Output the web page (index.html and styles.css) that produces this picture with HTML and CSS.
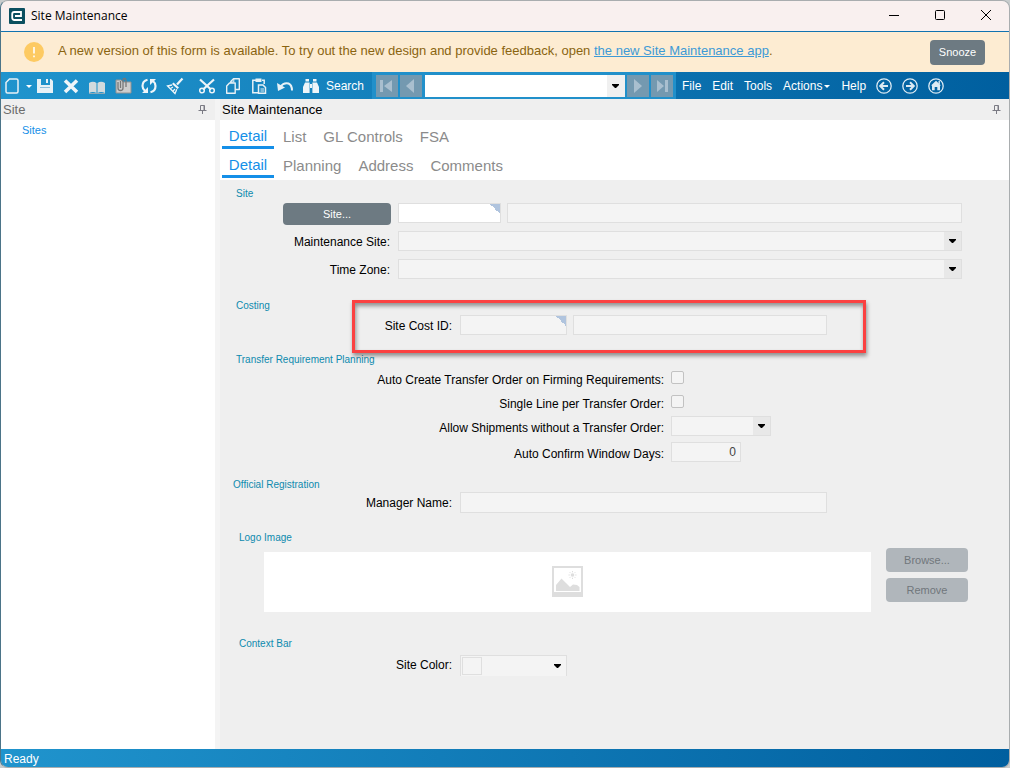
FILE: index.html
```
<!DOCTYPE html>
<html lang="en">
<head>
  <meta charset="UTF-8" />
  <meta name="viewport" content="width=device-width, initial-scale=1.0"/>
  <title>Site Maintenance</title>
  <link rel="stylesheet" href="styles.css">
</head>
<body>
<div class="window">

  <header class="titlebar">
    <svg class="app-logo" viewBox="0 0 16 16"><rect width="16" height="16" rx="1" fill="#0b4f60"/><path d="M13 12H5.500Q3.200 12 3.200 9.800V6Q3.200 4 5.200 4H12V8H6" fill="none" stroke="#fff" stroke-width="1.800"/></svg>
    <span class="title">Site Maintenance</span>
    <button class="win-btn" aria-label="Minimize"><svg viewBox="0 0 12 12"><path d="M1 6.5H11"/></svg></button>
    <button class="win-btn" aria-label="Maximize"><svg viewBox="0 0 12 12"><rect x="1.5" y="1.5" width="9" height="9" rx="1"/></svg></button>
    <button class="win-btn" aria-label="Close"><svg viewBox="0 0 12 12"><path d="M1 1L11 11M11 1L1 11"/></svg></button>
  </header>

  <div class="banner">
    <svg class="banner-icon" viewBox="0 0 20 20"><circle cx="10" cy="10" r="10" fill="#fdca62"/><path d="M10 5V11.5M10 13.5V15.2" stroke="#fff" stroke-width="1.6"/></svg>
    <p>A new version of this form is available. To try out the new design and provide feedback, open <a href="#">the new Site Maintenance app</a>.</p>
    <button class="btn snooze">Snooze</button>
  </div>

  <nav class="toolbar">
    <button class="tool new" aria-label="New"><svg viewBox="0 0 18 18"><path d="M6.5 2H13.5Q15 2 15 3.5V14.5Q15 16 13.5 16H4.5Q3 16 3 14.5V5.5Z" fill="none" stroke="#e8f1f6" stroke-width="1.5"/></svg></button>
    <button class="tool-caret" aria-label="New options"></button>
    <button class="tool" aria-label="Save"><svg viewBox="0 0 18 18"><path d="M1 2H5V8H14V2H15L17 4V16H1Z" fill="#e8f1f6"/><path d="M10 2H12V6H10Z" fill="#e8f1f6"/><path d="M4 10.5H14" stroke="#8dbedb"/></svg></button>
    <button class="tool" aria-label="Delete"><svg viewBox="0 0 18 18"><path d="M3 3.5L15 15M15 3.5L3 15" stroke="#eef5f9" stroke-width="3.6"/></svg></button>
    <button class="tool" aria-label="Book"><svg viewBox="0 0 18 18"><path d="M1 6Q5 3.5 8.5 6V16Q5 14 1 16ZM9.5 6Q13 3.5 17 6V16Q13 14 9.5 16Z" fill="#d2dadd"/><path d="M1 16.5H17" stroke="#8ba9b7"/></svg></button>
    <button class="tool" aria-label="Attachments"><svg viewBox="0 0 18 18"><path d="M2 3H7L9 5H17V16H2Z" fill="#cdcdcd" stroke="#929292"/><path d="M4 5V11Q4 13.500 6.500 13.500T9 11V3.500Q9 1.500 10.500 1.500T12 3.500V10M6.500 4V11" fill="none" stroke="#777" stroke-width="1.300"/></svg></button>
    <button class="tool" aria-label="Refresh"><svg viewBox="0 0 18 18"><path d="M7.5 2.7Q2.5 4 2.5 9Q2.5 12 5 14M10.5 15.3Q15.5 14 15.5 9Q15.5 6 13 4" fill="none" stroke="#eef5f9" stroke-width="2.2"/><path d="M2 16H8V10ZM16 2H10V8Z" fill="#eef5f9"/></svg></button>
    <button class="tool" aria-label="Clear"><svg viewBox="0 0 18 18"><path d="M16.500 1.500L11 7.500" stroke="#eef5f9" stroke-width="2.200"/><path d="M7.500 5.500L13 10.500L11.500 12L6 7Z" fill="#eef5f9"/><path d="M6 8L1.500 9L9 16.500L10.800 12.300" fill="none" stroke="#eef5f9" stroke-width="1.300"/><path d="M4.500 11.500L7 10M7 14L9 12" stroke="#eef5f9" stroke-width="1.200"/></svg></button>
    <button class="tool cut" aria-label="Cut"><svg viewBox="0 0 18 18"><path d="M2 2.5L13 12.5M16 2.5L5 12.5" stroke="#eef5f9" stroke-width="2.2"/><circle cx="4" cy="13.5" r="2.3" fill="none" stroke="#eef5f9" stroke-width="1.5"/><circle cx="14" cy="13.5" r="2.3" fill="none" stroke="#eef5f9" stroke-width="1.5"/></svg></button>
    <button class="tool" aria-label="Copy"><svg viewBox="0 0 18 18"><g fill="#1a86bf" stroke="#e8f1f6" stroke-width="1.4" stroke-linejoin="round"><path d="M9.5 1.8H15.3V12.5H6.8V4.5Z"/><path d="M5.5 6H11.2V16.2H2.7V9Z"/></g><path d="M9.8 2V5H7" fill="none" stroke="#e8f1f6"/></svg></button>
    <button class="tool" aria-label="Paste"><svg viewBox="0 0 18 18"><path d="M6 3.2H2.8V15.8H8M12 3.2H14.2V7" fill="none" stroke="#e8f1f6" stroke-width="1.5"/><path d="M5.5 1.5H11.5V5H5.5Z" fill="#e8f1f6"/><path d="M8.5 8H13L15.5 10.5V16.3H8.5Z" fill="#1a86bf" stroke="#e8f1f6" stroke-width="1.5"/><path d="M10.5 12H14M10.5 14H14" stroke="#e8f1f6"/></svg></button>
    <button class="tool" aria-label="Undo"><svg viewBox="0 0 18 18"><path d="M1 6L2 14L9 10.5Z" fill="#e8f1f6"/><path d="M4 10Q8 5 12.5 6.5Q16 8 16 13.5" fill="none" stroke="#e8f1f6" stroke-width="2"/></svg></button>
    <button class="tool-search"><svg viewBox="0 0 18 18"><path d="M3.5 2H7V4.5H3.5ZM11 2H14.5V4.5H11ZM3 5.5H7.6V16H1V10ZM10.4 5.5H15L17 10V16H10.4ZM8 7H10V11H8Z" fill="#eef5f9"/></svg>Search</button>

    <div class="record-nav">
      <button class="nav-btn" aria-label="First"><svg viewBox="0 0 22 22"><path d="M4 5H7V17H4ZM16 5V17L8 11Z"/></svg></button>
      <button class="nav-btn" aria-label="Previous"><svg viewBox="0 0 22 22"><path d="M14 4V18L6 11Z"/></svg></button>
      <select class="record-select" aria-label="Record"><option></option></select>
      <button class="nav-btn" aria-label="Next"><svg viewBox="0 0 22 22"><path d="M7 4V18L15 11Z"/></svg></button>
      <button class="nav-btn" aria-label="Last"><svg viewBox="0 0 22 22"><path d="M6 5V17L13 11ZM14 5H17V17H14Z"/></svg></button>
    </div>

    <div class="menus">
      <button>File</button>
      <button>Edit</button>
      <button>Tools</button>
      <button class="has-caret">Actions</button>
      <button>Help</button>
    </div>
    <button class="tool" aria-label="Back"><svg viewBox="0 0 18 18"><g fill="none" stroke="#dceaf3"><circle cx="9" cy="9" r="7.2" stroke-width="1.3"/><path d="M13 9H5.5M9 5.2L5.2 9L9 12.8" stroke-width="2"/></g></svg></button>
    <button class="tool" aria-label="Forward"><svg viewBox="0 0 18 18"><g fill="none" stroke="#dceaf3"><circle cx="9" cy="9" r="7.2" stroke-width="1.3"/><path d="M5 9H12.5M9 5.2L12.8 9L9 12.8" stroke-width="2"/></g></svg></button>
    <button class="tool" aria-label="Home"><svg viewBox="0 0 18 18"><circle cx="9" cy="9" r="7.2" stroke-width="1.3" fill="none" stroke="#dceaf3"/><path d="M9 3.8L14 8.5H13V13.3H10.3V10H7.7V13.3H5V8.5H4Z" fill="#dceaf3"/><path d="M12.2 4V7" stroke="#dceaf3" stroke-width="1.4"/></svg></button>
  </nav>

  <div class="panes">
    <aside class="tree-pane">
      <div class="pane-head">
        <span>Site</span>
        <svg class="pin" viewBox="0 0 9 11"><path d="M2.5 6V1.5H6.5V6M6 1.5V6M0.5 6.5H8.5M4.5 6.5V10"/></svg>
      </div>
      <a class="tree-link" href="#">Sites</a>
    </aside>

    <main class="main-pane">
      <div class="pane-head dark">
        <span>Site Maintenance</span>
        <svg class="pin" viewBox="0 0 9 11"><path d="M2.5 6V1.5H6.5V6M6 1.5V6M0.5 6.5H8.5M4.5 6.5V10"/></svg>
      </div>
      <div class="tabs">
        <button class="active">Detail</button>
        <button>List</button>
        <button>GL Controls</button>
        <button>FSA</button>
      </div>
      <div class="tabs">
        <button class="active">Detail</button>
        <button>Planning</button>
        <button>Address</button>
        <button>Comments</button>
      </div>

      <form class="form">
        <section class="group site">
          <h2>Site</h2>
          <div class="row">
            <button type="button" class="btn site-btn">Site...</button>
            <input type="text" class="key white" aria-label="Site ID">
            <input type="text" class="grow" aria-label="Site name" readonly>
          </div>
          <div class="row">
            <label for="maint-site">Maintenance Site:</label>
            <select id="maint-site" class="grow"><option></option></select>
          </div>
          <div class="row">
            <label for="time-zone">Time Zone:</label>
            <select id="time-zone" class="grow"><option></option></select>
          </div>
        </section>

        <section class="group costing">
          <h2>Costing</h2>
          <div class="row">
            <label for="cost-id">Site Cost ID:</label>
            <input type="text" id="cost-id" class="key">
            <input type="text" class="cost-name" aria-label="Site cost description" readonly>
          </div>
          <div class="highlight"></div>
        </section>

        <section class="group planning">
          <h2>Transfer Requirement Planning</h2>
          <div class="row">
            <label for="auto-create">Auto Create Transfer Order on Firming Requirements:</label>
            <input type="checkbox" id="auto-create">
          </div>
          <div class="row">
            <label for="single-line">Single Line per Transfer Order:</label>
            <input type="checkbox" id="single-line">
          </div>
          <div class="row">
            <label for="allow-ship">Allow Shipments without a Transfer Order:</label>
            <select id="allow-ship"><option></option></select>
          </div>
          <div class="row days">
            <label for="window-days">Auto Confirm Window Days:</label>
            <input type="text" id="window-days" class="number" value="0">
          </div>
        </section>

        <section class="group registration">
          <h2>Official Registration</h2>
          <div class="row">
            <label for="manager">Manager Name:</label>
            <input type="text" id="manager" class="manager">
          </div>
        </section>

        <section class="group logo">
          <h2>Logo Image</h2>
          <div class="logo-row">
            <div class="logo-box">
              <svg viewBox="0 0 31 31"><rect width="31" height="31" fill="#dedede"/><rect x="2" y="2" width="27" height="24" fill="#fff"/><path d="M4 25V19L9.500 12.500L14 17L18 21L21 18.500L25 19L27.500 21V25Z" fill="#dedede"/><circle cx="20.500" cy="9" r="1.800" fill="#dedede"/><path d="M20.500 5V6.300M20.500 11.700V13M16.500 9H17.800M23.200 9H24.500M17.700 6.200L18.600 7.100M22.400 10.900L23.300 11.800M23.300 6.200L22.400 7.100M18.600 10.900L17.700 11.800" stroke="#dedede"/></svg>
            </div>
            <div class="logo-actions">
              <button type="button" class="btn" disabled>Browse...</button>
              <button type="button" class="btn" disabled>Remove</button>
            </div>
          </div>
        </section>

        <section class="group context">
          <h2>Context Bar</h2>
          <div class="row">
            <label for="site-color">Site Color:</label>
            <select id="site-color" class="color"><option></option></select>
          </div>
        </section>
      </form>
    </main>
  </div>

  <footer class="statusbar">Ready</footer>
</div>
</body>
</html>
```
FILE: styles.css
```
:root {
  --slate: #6d7a82;
  --link: #148fe8;
  --panel: #efefef;
  --field: #f4f4f4;
  --line: #dfdfdf;
  --bar: linear-gradient(to right, #2094cd, #005f9f);
  --arrow: url("data:image/svg+xml,%3Csvg xmlns='http://www.w3.org/2000/svg' width='7' height='4'%3E%3Cpath d='M0 0H7V1L4 4H3L0 1Z'/%3E%3C/svg%3E");
}

* {
  margin: 0;
  padding: 0;
  box-sizing: border-box;
}

body {
  font-family: "Liberation Sans", Arial, sans-serif;
  font-size: 12px;
  background-color: #c8cccd;
  color: #000;
}

button,
input,
select {
  font-family: inherit;
  font-size: 12px;
}

button {
  border: none;
  background: none;
}

.window {
  display: flex;
  flex-direction: column;
  min-height: 100vh;
  border: 1px solid #a9adaf;
  border-left-color: #4b7488;
  border-radius: 8px;
  overflow: hidden;
}

/* title bar */
.titlebar {
  display: flex;
  align-items: center;
  height: 30px;
  padding-left: 8px;
  background-color: #f9f0ef;
}

.app-logo {
  width: 16px;
  height: 16px;
}

.title {
  flex: 1;
  margin-left: 6px;
  padding-bottom: 1px;
  font-family: "Open Sans", sans-serif;
  font-size: 12px;
}

.win-btn {
  width: 46px;
  height: 28px;
}

.win-btn svg {
  width: 12px;
  height: 12px;
  fill: none;
  stroke: #000;
}

/* new version banner */
.banner {
  display: flex;
  align-items: center;
  height: 41px;
  padding: 0 24px 0 23px;
  border-top: 1px solid #1173b0;
  background-color: #fdecd2;
  color: #8a6410;
  font-size: 13px;
}

.banner-icon {
  width: 20px;
  height: 20px;
}

.banner p {
  flex: 1;
  margin-left: 14px;
  padding-bottom: 3px;
}

.banner a {
  color: #3d9ad6;
}

.btn {
  height: 24px;
  border-radius: 4px;
  background-color: var(--slate);
  color: #fff;
  font-size: 11px;
}

.btn:disabled {
  background-color: #b0b6bb;
  color: #70777c;
}

.btn.snooze {
  width: 55px;
  height: 25px;
}

/* toolbar */
.toolbar {
  display: flex;
  align-items: center;
  height: 27px;
  background: var(--bar);
  color: #fff;
}

.toolbar button {
  flex-shrink: 0;
  color: #fff;
}

.tool {
  width: 26px;
  height: 27px;
}

.tool.new {
  width: 22px;
}

.tool.cut {
  margin-left: 6px;
}

.tool svg,
.tool-search svg {
  display: block;
  width: 18px;
  height: 18px;
  margin: 0 auto;
}

.tool-search svg {
  margin: 0;
}

.tool-caret {
  width: 9px;
  height: 27px;
}

.tool-caret::after,
.has-caret::after {
  content: "";
  display: inline-block;
  margin-left: 2px;
  vertical-align: middle;
  border: 3px solid transparent;
  border-top-color: #fff;
  border-bottom: none;
}

.tool-search {
  display: flex;
  align-items: center;
  gap: 6px;
  width: 74px;
  padding-left: 4px;
}

.record-nav {
  display: flex;
  flex: 1;
  align-items: center;
  gap: 2px;
  height: 27px;
  max-width: 304px;
  padding: 0 3px 0 4px;
  background-color: #2190ca;
}

.nav-btn {
  width: 22px;
  height: 22px;
  background-color: #7499b0;
}

.nav-btn svg {
  display: block;
  fill: #a9bfcf;
}

.record-select {
  appearance: none;
  flex: 1;
  min-width: 0;
  height: 22px;
  margin-left: 1px;
  border: none;
  background: var(--arrow) no-repeat right 6px center, linear-gradient(#f0f0f0, #f0f0f0) no-repeat right / 18px 100%, #fff;
}

.menus {
  display: flex;
  gap: 11px;
  padding: 0 5px 0 6px;
}

/* panes */
.panes {
  display: flex;
  flex: 1;
  gap: 5px;
  background-color: #f4f4f4;
}

.tree-pane {
  flex: 0 0 214px;
  background-color: #fff;
}

.pane-head {
  display: flex;
  align-items: center;
  justify-content: space-between;
  height: 21px;
  padding: 0 8px 0 2px;
  background-color: var(--panel);
  color: #6b6b6b;
  font-size: 13px;
}

.pane-head.dark {
  color: #000;
}

.pin {
  width: 9px;
  height: 11px;
  fill: none;
  stroke: #7b7b84;
}

.tree-link {
  display: inline-block;
  margin: 4px 0 0 21px;
  color: var(--link);
  font-size: 11px;
  text-decoration: none;
}

.main-pane {
  flex: 1;
  display: flex;
  flex-direction: column;
  background-color: #fff;
}

.tabs {
  display: flex;
  padding-left: 2px;
}

.tabs button {
  height: 29px;
  padding: 6px 8px 0 9px;
  border-bottom: 3px solid transparent;
  color: #8b8b8b;
  font-size: 15px;
}

.tabs .active {
  width: 52px;
  padding: 4px 0 0;
  border-bottom-color: var(--link);
  color: var(--link);
}

/* form */
.form {
  flex: 1;
  margin-top: 2px;
  padding: 7px 47px 20px 16px;
  background-color: var(--panel);
}

.group h2 {
  margin-bottom: 2px;
  color: #0d8aae;
  font-size: 10px;
  font-weight: normal;
  line-height: 14px;
}

.row {
  display: flex;
  align-items: flex-start;
  gap: 8px;
  height: 22px;
}

.row label {
  flex-shrink: 0;
  line-height: 23px;
  text-align: right;
}

.row input,
.row select {
  height: 20px;
  border: 1px solid var(--line);
  background-color: var(--field);
}

.row select {
  appearance: none;
  background: var(--arrow) no-repeat right 5px center, linear-gradient(#e8e8e8, #e8e8e8) no-repeat right / 17px 100%, var(--field);
}

/* lookup field with the search corner */
.row .key {
  width: 107px;
  margin-right: -2px;
  border-image: none;
  background: linear-gradient(to bottom left, #b0c4de 50%, transparent 50%) no-repeat right top / 10px 10px, var(--field);
}

.row .key.white {
  width: 103px;
  background-color: #fff;
}

.grow {
  flex: 1;
  min-width: 0;
}

.site .row + .row {
  margin-top: 6px;
}

.site label {
  width: 154px;
}

.site-btn {
  width: 108px;
  height: 22px;
  margin: 0 -1px 0 47px;
}

.costing {
  position: relative;
  margin-top: 18px;
}

.costing label {
  width: 216px;
}

.row .cost-name {
  width: 254px;
}

.highlight {
  position: absolute;
  top: 1px;
  left: 116px;
  width: 514px;
  height: 53px;
  border: 3px solid #fb4141;
  box-shadow: 1px 3px 4px rgba(0, 0, 0, 0.4), inset 1px 3px 4px rgba(0, 0, 0, 0.4);
  pointer-events: none;
}

.planning {
  margin-top: 16px;
}

.planning h2 {
  margin-bottom: 1px;
}

.planning label {
  width: 428px;
  line-height: 24px;
}

.planning .row {
  gap: 7px;
}

.planning .row + .row {
  margin-top: 2px;
}

.planning .row.days {
  margin-top: 4px;
}

.planning select {
  width: 100px;
}

.row input[type="checkbox"] {
  appearance: none;
  width: 13px;
  height: 13px;
  margin-top: 3px;
  border-color: #c2c2c2;
  border-radius: 2px;
}

.row .number {
  width: 70px;
  padding-right: 4px;
  color: #444;
  text-align: right;
}

.registration {
  margin: 14px 0 0 -3px;
}

.registration h2 {
  margin-bottom: 0;
}

.registration label {
  width: 219px;
}

.row .manager {
  width: 367px;
  height: 21px;
}

.logo,
.context {
  padding-left: 3px;
}

.logo {
  margin: 17px -6px 0 0;
}

.logo h2 {
  margin-bottom: 3px;
}

.context h2 {
  margin-bottom: 4px;
}

.logo-row {
  display: flex;
  gap: 15px;
  padding-left: 25px;
}

.logo-box {
  flex: 1;
  height: 60px;
  margin-top: 4px;
  padding-top: 14px;
  background-color: #fff;
  text-align: center;
}

.logo-box svg {
  width: 31px;
  height: 31px;
}

.logo-actions {
  display: flex;
  flex-direction: column;
  gap: 6px;
  width: 82px;
}

.context {
  margin-top: 25px;
}

.context label {
  width: 213px;
  line-height: 21px;
}

.row .color {
  width: 107px;
  height: 21px;
  border-bottom: none;
  background: var(--arrow) no-repeat right 5px center, linear-gradient(var(--field), var(--field)) no-repeat 2px 2px / 18px 16px, linear-gradient(var(--line), var(--line)) no-repeat 1px 1px / 20px 18px, var(--field);
}

.statusbar {
  height: 18px;
  padding-left: 3px;
  background: var(--bar);
  color: #fff;
  line-height: 20px;
}
```
